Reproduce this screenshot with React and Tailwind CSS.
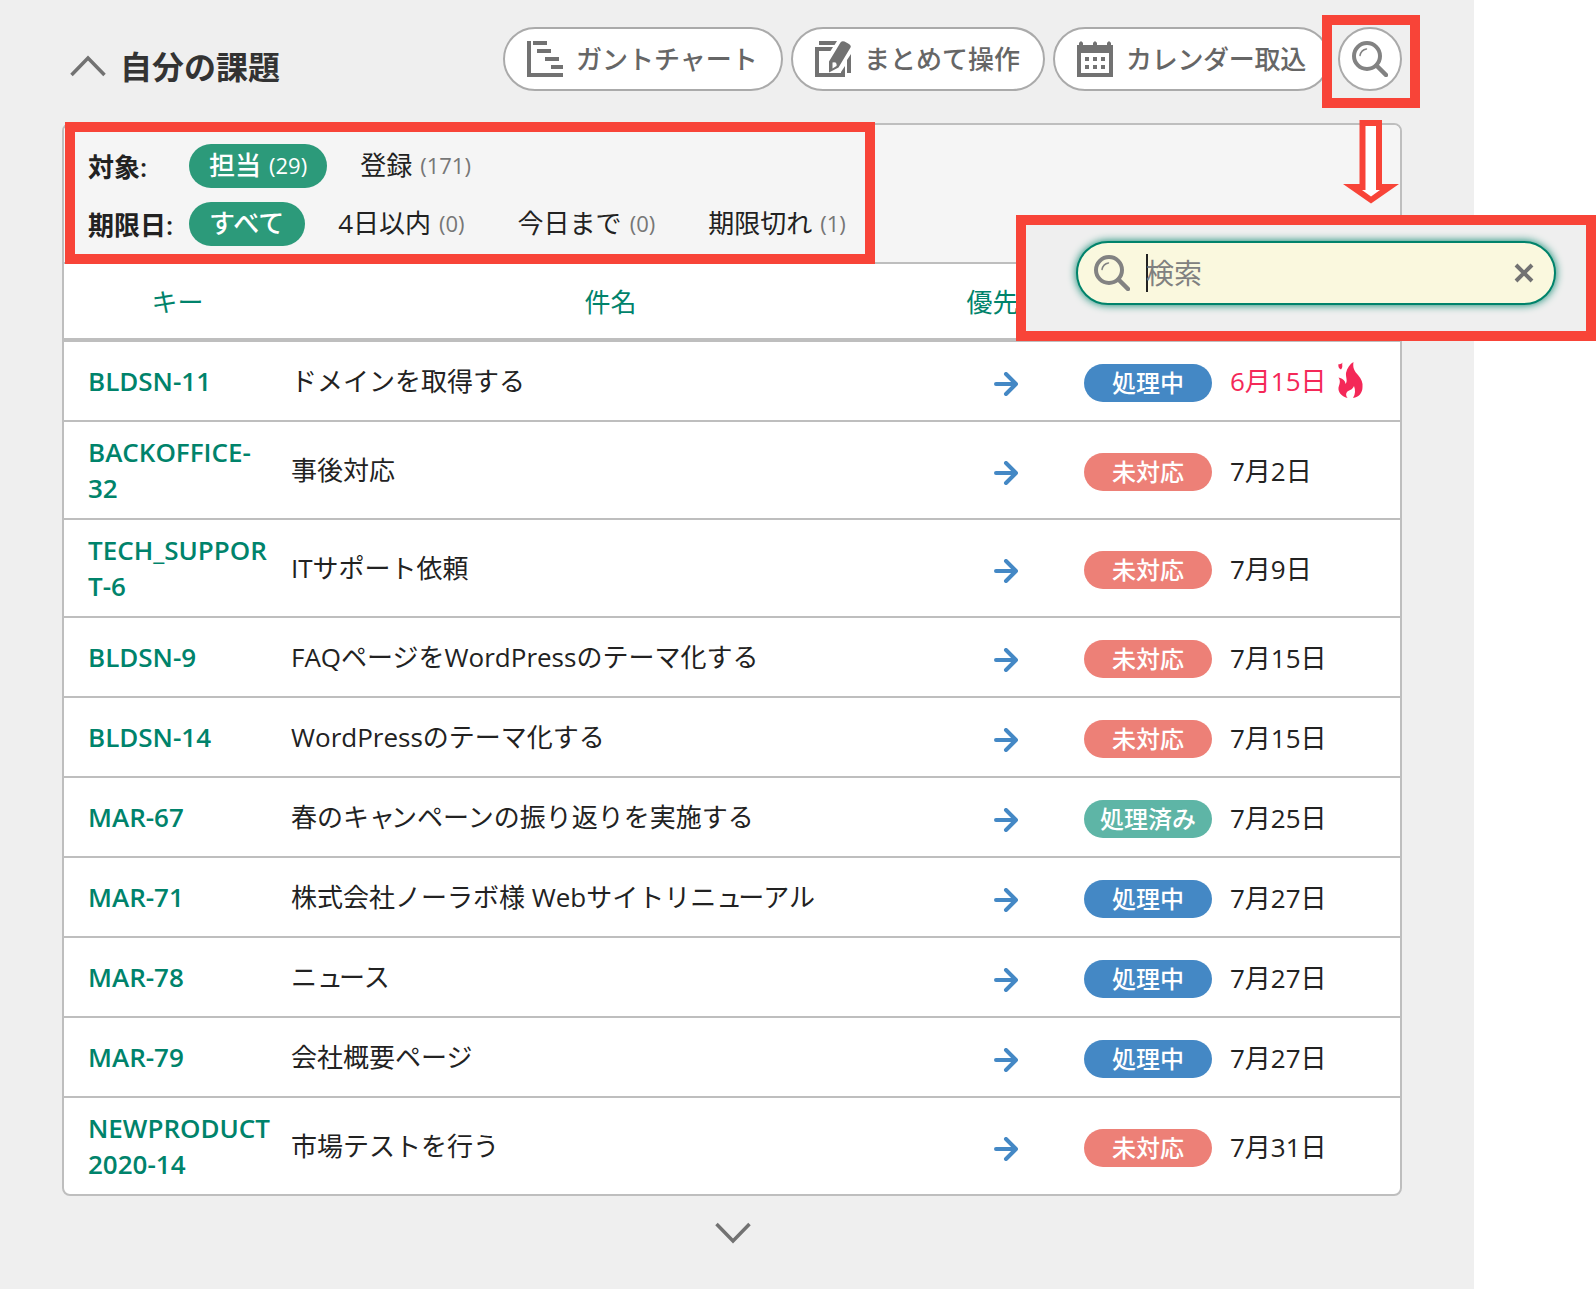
import React from "react";

const filters = [
  {
    label: "対象:",
    options: [
      { name: "担当", count: 29, active: true },
      { name: "登録", count: 171 },
    ],
  },
  {
    label: "期限日:",
    options: [
      { name: "すべて", active: true },
      { name: "4日以内", count: 0 },
      { name: "今日まで", count: 0 },
      { name: "期限切れ", count: 1 },
    ],
  },
];

const statusColors = {
  処理中: "bg-[#4488c5]",
  未対応: "bg-[#ed8077]",
  処理済み: "bg-[#5eb5a6]",
};

const issues = [
  { key: ["BLDSN-11"], title: "ドメインを取得する", status: "処理中", date: "6月15日", overdue: true },
  { key: ["BACKOFFICE-", "32"], title: "事後対応", status: "未対応", date: "7月2日" },
  { key: ["TECH_SUPPOR", "T-6"], title: "ITサポート依頼", status: "未対応", date: "7月9日" },
  { key: ["BLDSN-9"], title: "FAQページをWordPressのテーマ化する", status: "未対応", date: "7月15日" },
  { key: ["BLDSN-14"], title: "WordPressのテーマ化する", status: "未対応", date: "7月15日" },
  { key: ["MAR-67"], title: "春のキャンペーンの振り返りを実施する", status: "処理済み", date: "7月25日" },
  { key: ["MAR-71"], title: "株式会社ノーラボ様 Webサイトリニューアル", status: "処理中", date: "7月27日" },
  { key: ["MAR-78"], title: "ニュース", status: "処理中", date: "7月27日" },
  { key: ["MAR-79"], title: "会社概要ページ", status: "処理中", date: "7月27日" },
  { key: ["NEWPRODUCT", "2020-14"], title: "市場テストを行う", status: "未対応", date: "7月31日" },
];

const GanttIcon = () => (
  <svg width="36" height="36" viewBox="0 0 36 36" fill="#727272">
    <path d="M0 0h4v32h32v4H0zM6 0h14v4H6zM10 8h14v4H10zM18 16h14v4H18zM24 24h12v4H24z" />
  </svg>
);

const EditIcon = () => (
  <svg width="36" height="36" viewBox="0 0 36 36" fill="#727272">
    <path d="M4 0h18l-2.500 4H4zM0 6h18l-2.500 4H4v22h22v-1l4-6v15H0zM32 19l4-6v19h-4z" />
    <path
      fillRule="evenodd"
      d="M25.500 1.500Q27 -.5 29.500 .5L34 3Q36.500 4.500 35.500 6.500L23.500 26.500L14 31.500V20.500zM17.500 21.500V27.500L21.500 25Q22.500 20.500 17.500 21.500z"
    />
  </svg>
);

const CalendarIcon = () => (
  <svg width="36" height="36" viewBox="0 0 36 36" fill="#727272">
    <path
      fillRule="evenodd"
      d="M0 4H2V2Q4 -1.500 6 2V4H16V2Q18 -1.500 20 2V4H30V2Q32 -1.500 34 2V4H36V36H0zM4 12V32H32V12z"
    />
    <path d="M8 16h4v4H8zM16 16h4v4h-4zM24 16h4v4h-4zM8 24h4v4H8zM16 24h4v4h-4zM24 24h4v4h-4z" />
  </svg>
);

const SearchIcon = () => (
  <svg width="36" height="36" viewBox="0 0 36 36" fill="none" stroke="#828282">
    <circle cx="15" cy="15" r="13" strokeWidth="4" />
    <path d="M25 25L34 34" strokeWidth="4.500" strokeLinecap="round" />
    <path d="M8 14.500Q9 9 14.500 8" strokeWidth="1.500" strokeLinecap="round" />
  </svg>
);

const PriorityIcon = () => (
  <svg width="24" height="24" viewBox="0 0 24 24" fill="none" stroke="#4488c5" strokeWidth="4" strokeLinecap="round">
    <path d="M2 12H21M12 2L22 12L12 22" strokeLinejoin="round" />
  </svg>
);

const FireIcon = () => (
  <svg className="mb-1" width="26" height="36" viewBox="0 0 26 36" fill="#f42858">
    <path d="M15.500 0C14.500 6 16.500 9 20 13C23.500 17 25 21 24.500 25C24.500 31 21 35 15 36C17.500 32 17.500 28 16 24C14.500 28 11 28 9 30C7.500 32 8 34 9.500 36C3 34 0 30 .5 25.500C1.500 22 3 19 .5 15.500C5 16.500 7.500 19 7.500 22C10 19 7.500 15 8 11C9 6 12 2 15.500 0z" />
    <path d="M4.500 .5C3.500 3 5.500 4.500 3 7.500C.5 6.500 0 4 .5 2C1.500 2.500 3.500 2 4.500 .5z" />
  </svg>
);

const ToolButton = ({ icon, children, className = "" }) => (
  <button
    className={`flex h-16 items-center gap-[13px] rounded-full border-2 border-[#aaa] bg-white pl-[22px] text-[26px] font-medium whitespace-nowrap text-[#666] ${className}`}
  >
    {icon}
    <span>{children}</span>
  </button>
);

const FilterRow = ({ label, options }) => (
  <div className="flex h-11 items-center">
    <div className="w-[101px] pt-0.5 font-semibold">{label}</div>
    <div className="flex h-full gap-[13px]">
      {options.map((option) => (
        <button
          key={option.name}
          className={`flex h-full items-center gap-2 rounded-full px-5 pb-px whitespace-nowrap ${
            option.active ? "bg-[#2c9a7a] font-medium text-white" : ""
          } ${option.count === undefined ? "pr-[21px]" : ""}`}
        >
          <span>{option.name}</span>
          {option.count !== undefined && (
            <span className={option.active ? "pb-px text-[22px]" : "pb-px text-[22px] text-[#777]"}>
              ({option.count})
            </span>
          )}
        </button>
      ))}
    </div>
  </div>
);

// small kana sit tighter against the next character
const Title = ({ children }) =>
  children.split(/([ュャ])/).map((part, i) => (
    <span key={i} className={/^[ュャ]$/.test(part) ? "tracking-[-4px]" : ""}>
      {part}
    </span>
  ));

const IssueRow = ({ issue }) => (
  <div
    className={`flex items-center border-b-2 border-[#bebebe] pl-6 last:border-b-0 ${
      issue.key.length > 1 ? "h-[98px] last:h-24" : "h-20"
    }`}
  >
    <a className="w-[203px] leading-9 font-semibold text-[#00836b]">
      {issue.key.map((line) => (
        <span key={line} className="block">
          {line}
        </span>
      ))}
    </a>
    <div className="w-[637px]">
      <Title>{issue.title}</Title>
    </div>
    <div className="flex w-[156px] justify-center pt-1.5">
      <PriorityIcon />
    </div>
    <div className="pt-1">
      <div
        className={`flex h-[38px] w-32 items-center justify-center rounded-full text-2xl font-medium text-white ${
          statusColors[issue.status]
        }`}
      >
        {issue.status}
      </div>
    </div>
    <div className={`flex items-center gap-[11px] pl-[18px] ${issue.overdue ? "pt-px text-[#f42858]" : "pt-0.5"}`}>
      {issue.date}
      {issue.overdue && <FireIcon />}
    </div>
  </div>
);

const SearchPopup = () => (
  <div className="absolute top-[215px] left-[1016px] h-[126px] w-[580px] border-10 border-[#f84438] bg-[#efefef] pt-4 pl-[50px]">
    <div className="flex h-16 w-[480px] items-center rounded-full border-2 border-[#00836b] bg-[#faf8de] pl-4 text-[28px] text-[#808080] shadow-[0_0_8px_#00836b]">
      <SearchIcon />
      <span className="ml-4 h-[38px] w-0.5 bg-[#222]" />
      <span className="-ml-0.5 flex-1">検索</span>
      <svg className="mr-5" width="20" height="20" viewBox="0 0 20 20" stroke="#727272" strokeWidth="4">
        <path d="M2 2L18 18M18 2L2 18" />
      </svg>
    </div>
  </div>
);

const App = () => {
  return (
    <div
      lang="ja"
      className="relative h-[1289px] w-[1596px] overflow-hidden bg-white font-['Open_Sans','Noto_Sans_CJK_JP',sans-serif] text-[26px] text-[#222]"
    >
      <div className="h-full w-[1474px] bg-[#efefef] pl-[62px]">
        <div className="flex h-[123px] w-[1340px] items-start justify-between pt-[27px]">
          <div className="flex items-center gap-3.5 pt-4 pl-2">
            <svg className="mb-0.5" width="36" height="22" viewBox="0 0 36 22" fill="none" stroke="#727272" strokeWidth="3.500">
              <path d="M1.500 20L18 3L34.500 20" />
            </svg>
            <h1 className="text-[32px] leading-[48px] font-bold text-[#333]">自分の課題</h1>
          </div>
          <div className="flex gap-2">
            <ToolButton icon={<GanttIcon />} className="w-[280px]">ガントチャート</ToolButton>
            <ToolButton icon={<EditIcon />} className="w-[254px]">まとめて操作</ToolButton>
            <ToolButton icon={<CalendarIcon />} className="w-[277px] tracking-[-0.3px]">カレンダー取込</ToolButton>
            <button className="flex size-16 items-center justify-center rounded-full border-2 border-[#aaa] bg-white">
              <SearchIcon />
            </button>
          </div>
        </div>

        <div className="w-[1340px] overflow-hidden rounded-lg border-2 border-[#bebebe] bg-white">
          <div className="flex h-[139px] flex-col gap-3.5 border-b-2 border-[#bebebe] bg-[#f5f5f5] pt-[19px] pl-6">
            {filters.map((filter) => (
              <FilterRow key={filter.label} {...filter} />
            ))}
          </div>
          <div className="flex h-[78px] items-center border-b-4 border-[#bebebe] pt-0.5 pl-6 text-center text-[#00836b]">
            <div className="mr-[25px] w-[179px]">キー</div>
            <div className="w-[637px]">件名</div>
            <div className="w-[153px]">優先度</div>
          </div>
          <div>
            {issues.map((issue) => (
              <IssueRow key={issue.key.join("")} issue={issue} />
            ))}
          </div>
        </div>

        <div className="flex w-[1342px] justify-center pt-[26px]">
          <svg width="36" height="22" viewBox="0 0 36 22" fill="none" stroke="#727272" strokeWidth="3.500">
            <path d="M1.500 2L18 19L34.500 2" />
          </svg>
        </div>
      </div>

      {/* callouts over the panel */}
      <div className="absolute top-[122px] left-[65px] h-[142px] w-[810px] border-10 border-[#f84438]" />
      <div className="absolute top-[15px] left-[1322px] h-[93px] w-[98px] border-10 border-[#f84438]" />
      <svg className="absolute top-[120px] left-[1343px]" width="56" height="84" viewBox="0 0 56 84">
        <path d="M16.500 0H39V64H56L28 83.500L0 64H16.500z" fill="#f84438" />
        <path d="M22.500 6H33V70H37L28 76.500L19 70H22.500z" fill="#fff" />
      </svg>
      <SearchPopup />
    </div>
  );
};

export default App;
